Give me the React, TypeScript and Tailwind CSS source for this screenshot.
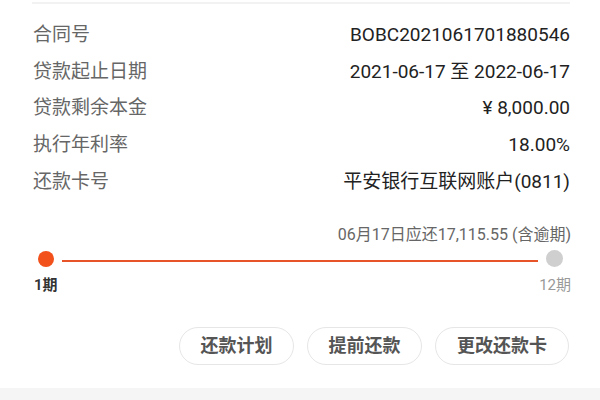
import React from 'react';

const rows: [string, string][] = [
    ['合同号', 'BOBC2021061701880546'],
    ['贷款起止日期', '2021-06-17 至 2022-06-17'],
    ['贷款剩余本金', '¥ 8,000.00'],
    ['执行年利率', '18.00%'],
    ['还款卡号', '平安银行互联网账户(0811)'],
];

const font = { fontFamily: 'Roboto, "Noto Sans CJK SC", sans-serif' };

export default function App() {
    return (
        <div className="w-[600px] h-[400px] bg-white flex flex-col overflow-hidden" style={font}>
            <div className="ml-[32px] mr-[30px] h-[2px] mt-[2px] bg-[#f2f2f2]" />
            <div className="flex flex-col pl-[33px] pr-[30px] pt-[12px]">
                {rows.map(([label, value]) => (
                    <div key={label} className="flex items-center justify-between h-[36.75px] text-[19px] leading-none">
                        <span className="text-[#666666]">{label}</span>
                        <span className="text-[#222222]">{value}</span>
                    </div>
                ))}
            </div>

            <div className="flex flex-col pl-[33px] pr-[29px] pt-[27px]">
                <div className="text-right text-[16px] leading-none text-[#666666]">
                    06月17日应还17,115.55 (含逾期)
                </div>
                <div className="flex items-center h-[20px] mt-[6px] pl-[5px] pr-[8px]">
                    <div className="w-[16px] h-[16px] rounded-full bg-[#f2511b] shrink-0" />
                    <div className="flex-1 h-[2px] bg-[#e8542a] mx-[8px] mt-[4px]" />
                    <div className="w-[17px] h-[17px] rounded-full bg-[#cfcfcf] shrink-0" />
                </div>
                <div className="flex justify-between mt-[9px] text-[15px] leading-none">
                    <span className="text-[#333333] font-semibold pl-[1px]">1期</span>
                    <span className="text-[#999999]">12期</span>
                </div>
            </div>

            <div className="flex justify-end gap-[13px] pr-[31px] mt-[34px]">
                <button className="w-[115px] h-[38px] rounded-full border border-[#e6e6e6] text-[18px] font-bold text-[#555555]">还款计划</button>
                <button className="w-[115px] h-[38px] rounded-full border border-[#e6e6e6] text-[18px] font-bold text-[#555555]">提前还款</button>
                <button className="w-[134px] h-[38px] rounded-full border border-[#e6e6e6] text-[18px] font-bold text-[#555555]">更改还款卡</button>
            </div>

            <div className="mt-auto h-[12px] bg-[#f5f5f5]" />
        </div>
    );
}
